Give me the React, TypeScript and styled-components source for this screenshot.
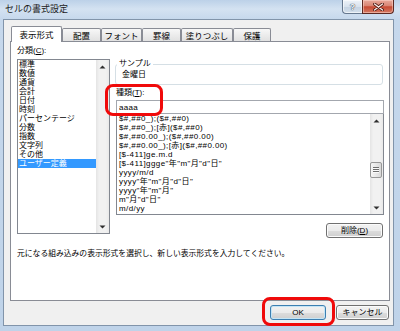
import React from "react";
import styled, { createGlobalStyle } from "styled-components";

const GlobalStyle = createGlobalStyle`
  html, body { margin: 0; padding: 0; width: 400px; height: 331px; overflow: hidden; background: #c3d6eb; }
  body { font-family: "Liberation Sans", "Noto Sans CJK JP", sans-serif; color: #000; }
  *, *::before, *::after { box-sizing: border-box; }
`;

const Window = styled.div`
  width: 400px;
  height: 331px;
  display: flex;
  flex-direction: column;
  padding: 0 6px 5px 3px;
  background: linear-gradient(180deg, #bcd1e8 0px, #d4e2f1 9px, #c6d8ec 19px, #bfd3e9 100%);
`;

const TitleBar = styled.div`
  height: 19px;
  flex: none;
  display: flex;
  justify-content: space-between;
  align-items: flex-start;
`;

const Title = styled.div`
  padding: 3px 0 0 2px;
  font-size: 9px;
  line-height: 12px;
  color: #1b1b1b;
  font-family: "Noto Sans CJK JP", sans-serif;
`;

const CaptionButtons = styled.div`
  display: flex;
  height: 14px;
`;

const HelpButton = styled.div`
  width: 20px;
  height: 14px;
  display: flex;
  align-items: center;
  justify-content: center;
  border: 1px solid #66788f;
  border-top: none;
  border-right: none;
  border-radius: 0 0 0 4px;
  background: linear-gradient(180deg, #eef3f9 0%, #d9e3ee 50%, #c5d3e3 51%, #d3dfeb 100%);
  box-shadow: inset 0 0 0 1px rgba(255, 255, 255, 0.6);
  font-size: 9px;
  line-height: 10px;
  font-weight: bold;
  color: #f6f9fc;
  text-shadow: 0 0 1px #2d3a4a, 0 0 1px #2d3a4a;
`;

const CloseButton = styled.div`
  width: 32px;
  height: 14px;
  display: flex;
  align-items: center;
  justify-content: center;
  border: 1px solid #5b2821;
  border-top: none;
  border-radius: 0 0 4px 0;
  background: linear-gradient(180deg, #e8a99b 0%, #d98573 45%, #c74a33 52%, #d47a63 100%);
  box-shadow: inset 0 0 0 1px rgba(255, 220, 210, 0.5);
`;

const Client = styled.div`
  flex: 1;
  display: flex;
  flex-direction: column;
  background: #f0f0f0;
  border: 1px solid #8194aa;
  padding: 6px 3px 0 6px;
`;

const TabRow = styled.div`
  display: flex;
  align-items: flex-end;
  height: 16px;
  padding-left: 1px;
  margin-bottom: -1px;
  position: relative;
  z-index: 1;
`;

const Tab = styled.div<{ $w: number; $active?: boolean }>`
  width: ${(p) => p.$w}px;
  height: ${(p) => (p.$active ? 16 : 13)}px;
  margin-bottom: ${(p) => (p.$active ? 0 : 1)}px;
  padding-bottom: ${(p) => (p.$active ? 2 : 0)}px;
  display: flex;
  align-items: center;
  justify-content: center;
  font-family: "Noto Sans CJK JP", sans-serif;
  font-size: 8.5px;
  line-height: 10px;
  white-space: nowrap;
  border: 1px solid #898c95;
  border-bottom: none;
  border-radius: 2px 2px 0 0;
  background: ${(p) =>
    p.$active ? "#ffffff" : "linear-gradient(180deg, #f7f7f7 0%, #ececec 50%, #e1e1e1 100%)"};
`;

const Panel = styled.div`
  height: 260px;
  flex: none;
  background: #fff;
  border: 1px solid #898c95;
  display: flex;
  flex-direction: column;
  padding: 4px 5px 0 6px;
`;

const Columns = styled.div`
  display: flex;
  gap: 5px;
`;

const LeftCol = styled.div`
  width: 93px;
  flex: none;
  display: flex;
  flex-direction: column;
`;

const RightCol = styled.div`
  flex: 1;
  display: flex;
  flex-direction: column;
  padding-top: 13px;
`;

const FieldLabel = styled.div<{ $indent?: number }>`
  font-size: 8px;
  line-height: 10px;
  height: 10px;
  white-space: nowrap;
  padding-left: ${(p) => p.$indent ?? 0}px;
`;

const ListBox = styled.div<{ $h: number }>`
  height: ${(p) => p.$h}px;
  border: 1px solid #828790;
  background: #fff;
  display: flex;
  overflow: hidden;
`;

const CategoryBox = styled(ListBox)`
  margin-top: 3px;
`;

const FormatBox = styled(ListBox)`
  margin: -1px 0 0 1px;
`;

const Items = styled.div`
  flex: 1;
  min-width: 0;
  overflow: hidden;
`;

const Item = styled.div<{ $selected?: boolean; $pad: number; $spacing?: number }>`
  font-size: 8px;
  line-height: 9px;
  height: 9px;
  white-space: nowrap;
  letter-spacing: ${(p) => p.$spacing ?? 0}px;
  padding-left: ${(p) => p.$pad}px;
  background: ${(p) => (p.$selected ? "#3399ff" : "transparent")};
  color: ${(p) => (p.$selected ? "#ffffff" : "#000000")};
`;

const ScrollBar = styled.div`
  width: 13px;
  flex: none;
  display: flex;
  flex-direction: column;
  background: linear-gradient(90deg, #e4e4e4 0%, #f1f1f1 25%, #f1f1f1 75%, #e9e9e9 100%);
`;

const ArrowBox = styled.div`
  height: 13px;
  flex: none;
  display: flex;
  align-items: center;
  justify-content: center;
`;

const TrackSpace = styled.div`
  flex: 1;
`;

const Thumb = styled.div<{ $offset: number }>`
  margin: ${(p) => p.$offset}px 1px 0 0;
  height: 16px;
  flex: none;
  border: 1px solid #979797;
  border-radius: 2px;
  background: linear-gradient(90deg, #f5f5f5 0%, #e8e8e8 50%, #d8d8d8 100%);
  display: flex;
  align-items: center;
  justify-content: center;
`;

const SampleGroup = styled.fieldset`
  margin: 0 1px 0 0;
  padding: 1px 0 4px 0;
  min-width: 0;
  border: 1px solid #d5dfe5;
  border-radius: 3px;
`;

const SampleLegend = styled.legend`
  margin-left: 1px;
  padding: 0 2px;
  font-size: 8px;
  line-height: 10px;
`;

const SampleValue = styled.div`
  padding-left: 6px;
  font-size: 8px;
  line-height: 10px;
`;

const TypeField = styled.div`
  position: relative;
  margin-top: 3px;
  display: flex;
  flex-direction: column;
`;

const TypeInput = styled.input`
  display: block;
  margin: 2px 0 0 1px;
  width: calc(100% - 1px);
  height: 14px;
  padding: 0 0 0 2px;
  border: 1px solid #a3a7ae;
  outline: none;
  background: #fff;
  font-family: "Liberation Sans", "Noto Sans CJK JP", sans-serif;
  font-size: 8px;
  line-height: 12px;
  letter-spacing: 0.3px;
  color: #000;
`;

const Callout = styled.div<{ $l: number; $t: number; $w: number; $h: number }>`
  position: absolute;
  left: ${(p) => p.$l}px;
  top: ${(p) => p.$t}px;
  width: ${(p) => p.$w}px;
  height: ${(p) => p.$h}px;
  border: 3px solid #f00a0a;
  border-radius: 8px;
  z-index: 3;
  pointer-events: none;
`;

const DialogButton = styled.div<{ $w: number; $default?: boolean }>`
  width: ${(p) => p.$w}px;
  height: 15px;
  flex: none;
  display: flex;
  align-items: center;
  justify-content: center;
  font-size: 8px;
  line-height: 10px;
  white-space: nowrap;
  border: 1px solid ${(p) => (p.$default ? "#3c7fb1" : "#707070")};
  border-radius: 3px;
  background: linear-gradient(180deg, #f2f2f2 0%, #ebebeb 50%, #dddddd 51%, #cfcfcf 100%);
  box-shadow: inset 0 0 0 1px ${(p) => (p.$default ? "#c4e5f6" : "#fbfbfb")};
`;

const DeleteButton = styled(DialogButton)`
  align-self: flex-end;
  margin: 8px 1px 0 0;
`;

const Description = styled.div`
  margin-top: 11px;
  font-size: 7.8px;
  line-height: 10px;
  white-space: nowrap;
`;

const ButtonRow = styled.div`
  display: flex;
  justify-content: flex-end;
  gap: 10px;
  margin: 4px 1px 0 0;
`;

const CalloutAnchor = styled.div`
  position: relative;
  display: flex;
`;

const UpArrow = () => (
  <svg width="7" height="4" viewBox="0 0 7 4">
    <path d="M0.5 3.5 L3.5 0.5 L6.5 3.5 Z" fill="#2f2f2f" />
  </svg>
);

const DownArrow = () => (
  <svg width="7" height="4" viewBox="0 0 7 4">
    <path d="M0.5 0.5 L3.5 3.5 L6.5 0.5 Z" fill="#2f2f2f" />
  </svg>
);

const Grip = () => (
  <svg width="6" height="6" viewBox="0 0 6 6">
    <path d="M0 0.5 H6 M0 2.5 H6 M0 4.5 H6" stroke="#6e6e6e" strokeWidth="1" />
    <path d="M0 1.5 H6 M0 3.5 H6 M0 5.5 H6" stroke="#fafafa" strokeWidth="1" />
  </svg>
);

const tabs = [
  { label: "表示形式", w: 51, active: true },
  { label: "配置", w: 39 },
  { label: "フォント", w: 41 },
  { label: "罫線", w: 39 },
  { label: "塗りつぶし", w: 52 },
  { label: "保護", w: 38 },
];

const categories = [
  "標準",
  "数値",
  "通貨",
  "会計",
  "日付",
  "時刻",
  "パーセンテージ",
  "分数",
  "指数",
  "文字列",
  "その他",
  "ユーザー定義",
];

const formats = [
  "$#,##0_);($#,##0)",
  "$#,##0_);[赤]($#,##0)",
  "$#,##0.00_);($#,##0.00)",
  "$#,##0.00_);[赤]($#,##0.00)",
  "[$-411]ge.m.d",
  '[$-411]ggge"年"m"月"d"日"',
  "yyyy/m/d",
  'yyyy"年"m"月"d"日"',
  'yyyy"年"m"月"',
  'm"月"d"日"',
  "m/d/yy",
];

export default function App() {
  return (
    <>
      <GlobalStyle />
      <Window>
        <TitleBar>
          <Title>セルの書式設定</Title>
          <CaptionButtons>
            <HelpButton>?</HelpButton>
            <CloseButton>
              <svg width="11" height="8" viewBox="0 0 11 8">
                <path d="M1.5 1 L9.5 7 M9.5 1 L1.5 7" stroke="#4a1a12" strokeWidth="3" strokeLinecap="round" />
                <path d="M1.5 1 L9.5 7 M9.5 1 L1.5 7" stroke="#fbe9e5" strokeWidth="1.5" strokeLinecap="round" />
              </svg>
            </CloseButton>
          </CaptionButtons>
        </TitleBar>
        <Client>
          <TabRow>
            {tabs.map((t) => (
              <Tab key={t.label} $w={t.w} $active={t.active}>
                {t.label}
              </Tab>
            ))}
          </TabRow>
          <Panel>
            <Columns>
              <LeftCol>
                <FieldLabel>
                  分類(<u>C</u>):
                </FieldLabel>
                <CategoryBox $h={175}>
                  <Items>
                    {categories.map((c, i) => (
                      <Item key={c} $pad={1} $selected={i === categories.length - 1}>
                        {c}
                      </Item>
                    ))}
                  </Items>
                  <ScrollBar>
                    <ArrowBox>
                      <UpArrow />
                    </ArrowBox>
                    <TrackSpace />
                    <ArrowBox>
                      <DownArrow />
                    </ArrowBox>
                  </ScrollBar>
                </CategoryBox>
              </LeftCol>
              <RightCol>
                <SampleGroup>
                  <SampleLegend>サンプル</SampleLegend>
                  <SampleValue>金曜日</SampleValue>
                </SampleGroup>
                <TypeField>
                  <FieldLabel $indent={1}>
                    種類(<u>T</u>):
                  </FieldLabel>
                  <TypeInput readOnly value="aaaa" />
                  <Callout $l={-10} $t={-4} $w={58} $h={32} />
                </TypeField>
                <FormatBox $h={102}>
                  <Items>
                    {formats.map((f) => (
                      <Item key={f} $pad={2} $spacing={0.4}>
                        {f}
                      </Item>
                    ))}
                  </Items>
                  <ScrollBar>
                    <ArrowBox>
                      <UpArrow />
                    </ArrowBox>
                    <Thumb $offset={35}>
                      <Grip />
                    </Thumb>
                    <TrackSpace />
                    <ArrowBox>
                      <DownArrow />
                    </ArrowBox>
                  </ScrollBar>
                </FormatBox>
                <DeleteButton $w={57}>
                  削除(<u>D</u>)
                </DeleteButton>
              </RightCol>
            </Columns>
            <Description>
              元になる組み込みの表示形式を選択し、新しい表示形式を入力してください。
            </Description>
          </Panel>
          <ButtonRow>
            <CalloutAnchor>
              <DialogButton $w={56} $default>
                OK
              </DialogButton>
              <Callout $l={-8} $t={-8} $w={73} $h={29} />
            </CalloutAnchor>
            <DialogButton $w={53}>キャンセル</DialogButton>
          </ButtonRow>
        </Client>
      </Window>
    </>
  );
}
